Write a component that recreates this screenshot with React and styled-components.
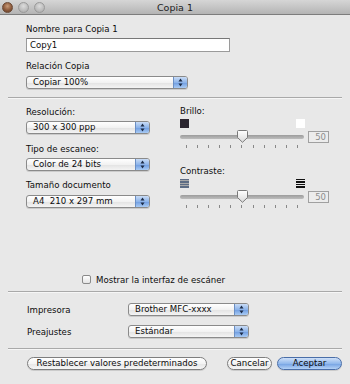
import React from "react";
import styled, { createGlobalStyle, css } from "styled-components";

const Global = createGlobalStyle`
  html, body { margin: 0; padding: 0; }
  body { width: 350px; height: 384px; overflow: hidden; background: #e8e8e8; }
  * { box-sizing: border-box; }
`;

const Window = styled.div`
  width: 350px;
  height: 384px;
  background: #e8e8e8;
  font-family: "DejaVu Sans", "Liberation Sans", sans-serif;
  font-size: 8.6px;
  color: #0c0c0c;
  display: flex;
  flex-direction: column;
`;

const TitleBar = styled.div`
  height: 15px;
  flex: none;
  display: flex;
  align-items: center;
  position: relative;
  background: linear-gradient(#d6d6d6, #b4b4b4);
  border-bottom: 1px solid #7d7d7d;
`;

const Lights = styled.div`
  display: flex;
  gap: 5px;
  padding-left: 2px;
`;

const Light = styled.span`
  width: 11px;
  height: 11px;
  border-radius: 50%;
  ${(p) =>
    p.$close
      ? css`
          background: radial-gradient(circle at 50% 35%, #c89a78 0%, #8c5a3c 55%, #5e3a26 100%);
          border: 1px solid #6b4a36;
        `
      : css`
          background: radial-gradient(circle at 50% 35%, #dcdcdc 0%, #bcbcbc 60%, #a6a6a6 100%);
          border: 1px solid #9a9a9a;
        `}
`;

const Title = styled.div`
  position: absolute;
  left: 0;
  right: 0;
  text-align: center;
  font-size: 9.5px;
  color: #222;
  pointer-events: none;
`;

const Content = styled.div`
  padding: 0 8px;
  display: flex;
  flex-direction: column;
`;

const Section = styled.div`
  padding-left: 18px;
  display: flex;
  flex-direction: column;
  align-items: flex-start;
`;

const Label = styled.div`
  line-height: 11px;
  height: 11px;
  margin-top: ${(p) => p.$mt || 0}px;
  white-space: nowrap;
`;

const TextField = styled.div`
  margin-top: 3px;
  width: 204px;
  height: 14px;
  background: #fff;
  border: 1px solid #9a9a9a;
  border-top-color: #777;
  padding-left: 3px;
  line-height: 12px;
`;

const PopupWrap = styled.div`
  margin-top: ${(p) => p.$mt || 0}px;
  width: ${(p) => p.$w}px;
  height: 13px;
  border: 1px solid #8a8a8a;
  border-radius: 3px;
  display: flex;
  overflow: hidden;
  background: linear-gradient(#ffffff, #f2f2f2 50%, #e2e2e2 51%, #f4f4f4);
  box-shadow: 0 1px 0 rgba(0, 0, 0, 0.12);
`;

const PopupText = styled.div`
  flex: 1;
  padding-left: 6px;
  line-height: 11px;
  white-space: pre;
`;

const PopupArrows = styled.div`
  width: 14px;
  flex: none;
  border-left: 1px solid #6b8fc4;
  background: linear-gradient(#c9dcf6, #8db4ea 50%, #6d9be0 51%, #a9cbf4);
  display: flex;
  align-items: center;
  justify-content: center;
`;

const Popup = ({ w, mt, children }) => (
  <PopupWrap $w={w} $mt={mt}>
    <PopupText>{children}</PopupText>
    <PopupArrows>
      <svg width="5" height="9" viewBox="0 0 5 9">
        <path d="M2.5 0.5 L4.5 3.5 L0.5 3.5 Z" fill="#1c2b45" />
        <path d="M2.5 8.5 L4.5 5.5 L0.5 5.5 Z" fill="#1c2b45" />
      </svg>
    </PopupArrows>
  </PopupWrap>
);

const Separator = styled.div`
  height: 2px;
  flex: none;
  margin-top: ${(p) => p.$mt || 0}px;
  border-top: 1px solid #a9a9a9;
  border-bottom: 1px solid #f6f6f6;
`;

const Columns = styled.div`
  display: flex;
  padding-left: 18px;
`;

const LeftColumn = styled.div`
  width: 154px;
  display: flex;
  flex-direction: column;
  align-items: flex-start;
`;

const RightColumn = styled.div`
  display: flex;
  flex-direction: column;
`;

const SliderBlock = styled.div`
  margin-top: ${(p) => p.$mt}px;
  display: flex;
  flex-direction: column;
`;

const IconRow = styled.div`
  margin-top: 2px;
  width: 125px;
  height: 9px;
  display: flex;
  justify-content: space-between;
`;

const Swatch = styled.span`
  width: 9px;
  height: 9px;
  background: ${(p) => (p.$dark ? "#2b2630" : "#ffffff")};
`;

const Stripes = styled.span`
  width: 9px;
  height: 9px;
  background: repeating-linear-gradient(
    ${(p) => p.$c} 0 1.5px,
    ${(p) => p.$bg} 1.5px 2.5px
  );
`;

const SliderRow = styled.div`
  margin-top: 2px;
  height: 13px;
  display: flex;
  align-items: center;
  gap: 4px;
`;

const Track = styled.div`
  width: 124px;
  height: 13px;
  position: relative;
  &::before {
    content: "";
    position: absolute;
    left: 0;
    right: 0;
    top: 5px;
    height: 4px;
    border-radius: 2px;
    background: linear-gradient(#9c9c9c, #bdbdbd);
  }
`;

const ThumbSvg = styled.svg`
  position: absolute;
  left: 57px;
  top: 0;
`;

const ValueBox = styled.div`
  width: 21px;
  height: 12px;
  border: 1px solid #a0a0a0;
  background: #ececec;
  color: #8c8c8c;
  text-align: right;
  padding-right: 2px;
  line-height: 10px;
  font-size: 8.5px;
`;

const Ticks = styled.div`
  margin-top: 2px;
  width: 124px;
  padding: 0 6px;
  height: 3px;
  display: flex;
  justify-content: space-between;
`;

const Tick = styled.span`
  width: 1px;
  height: 3px;
  background: #888;
`;

const Slider = () => (
  <>
    <SliderRow>
      <Track>
        <ThumbSvg width="11" height="13" viewBox="0 0 11 13">
          <defs>
            <linearGradient id="tg" x1="0" y1="0" x2="0" y2="1">
              <stop offset="0" stopColor="#ffffff" />
              <stop offset="1" stopColor="#d9d9d9" />
            </linearGradient>
          </defs>
          <path
            d="M1.5 0.5 H9.5 Q10.5 0.5 10.5 1.5 V7.5 L5.5 12.3 L0.5 7.5 V1.5 Q0.5 0.5 1.5 0.5 Z"
            fill="url(#tg)"
            stroke="#7a7a7a"
          />
        </ThumbSvg>
      </Track>
      <ValueBox>50</ValueBox>
    </SliderRow>
    <Ticks>
      {Array.from({ length: 11 }).map((_, i) => (
        <Tick key={i} />
      ))}
    </Ticks>
  </>
);

const CheckRow = styled.div`
  margin-top: 66px;
  display: flex;
  align-items: center;
  gap: 5px;
  padding-left: 74px;
  height: 11px;
`;

const Checkbox = styled.span`
  width: 9px;
  height: 9px;
  border: 1px solid #8a8a8a;
  border-radius: 2px;
  background: linear-gradient(#ffffff, #e4e4e4);
`;

const FormRow = styled.div`
  margin-top: ${(p) => p.$mt}px;
  display: flex;
  align-items: center;
  padding-left: 19px;
`;

const FormLabel = styled.div`
  width: 101px;
`;

const ButtonRow = styled.div`
  margin-top: 7px;
  display: flex;
  padding-left: 19px;
`;

const Button = styled.div`
  width: ${(p) => p.$w}px;
  margin-left: ${(p) => p.$ml || 0}px;
  height: 13px;
  border-radius: 7px;
  border: 1px solid ${(p) => (p.$primary ? "#4a6ea8" : "#7e7e7e")};
  text-align: center;
  line-height: 11px;
  white-space: nowrap;
  background: ${(p) =>
    p.$primary
      ? "linear-gradient(#cfe0f8, #92b9ec 50%, #72a0e2 51%, #b4d2f6)"
      : "linear-gradient(#ffffff, #f4f4f4 50%, #e6e6e6 51%, #f6f6f6)"};
  box-shadow: 0 1px 0 rgba(0, 0, 0, 0.12);
`;

export default function App() {
  return (
    <Window>
      <Global />
      <TitleBar>
        <Lights>
          <Light $close />
          <Light />
          <Light />
        </Lights>
        <Title>Copia 1</Title>
      </TitleBar>
      <Content>
        <Section>
          <Label $mt={9}>Nombre para Copia 1</Label>
          <TextField>Copy1</TextField>
          <Label $mt={9}>Relación Copia</Label>
          <Popup w={162} mt={4}>Copiar 100%</Popup>
        </Section>
        <Separator $mt={8} />
        <Columns>
          <LeftColumn>
            <Label $mt={8}>Resolución:</Label>
            <Popup w={124} mt={3}>300 x 300 ppp</Popup>
            <Label $mt={10}>Tipo de escaneo:</Label>
            <Popup w={124} mt={3}>Color de 24 bits</Popup>
            <Label $mt={9}>Tamaño documento</Label>
            <Popup w={124} mt={4}>{"A4  210 x 297 mm"}</Popup>
          </LeftColumn>
          <RightColumn>
            <SliderBlock $mt={7}>
              <Label>Brillo:</Label>
              <IconRow>
                <Swatch $dark />
                <Swatch />
              </IconRow>
              <Slider />
            </SliderBlock>
            <SliderBlock $mt={18}>
              <Label>Contraste:</Label>
              <IconRow>
                <Stripes $c="#5d6c84" $bg="#a8a8a8" />
                <Stripes $c="#111" $bg="#e8e8e8" />
              </IconRow>
              <Slider />
            </SliderBlock>
          </RightColumn>
        </Columns>
        <CheckRow>
          <Checkbox />
          <span>Mostrar la interfaz de escáner</span>
        </CheckRow>
        <Separator $mt={6} />
        <FormRow $mt={10}>
          <FormLabel>Impresora</FormLabel>
          <Popup w={121}>Brother MFC-xxxx</Popup>
        </FormRow>
        <FormRow $mt={9}>
          <FormLabel>Preajustes</FormLabel>
          <Popup w={121}>Estándar</Popup>
        </FormRow>
        <Separator $mt={10} />
        <ButtonRow>
          <Button $w={180}>Restablecer valores predeterminados</Button>
          <Button $w={45} $ml={20}>Cancelar</Button>
          <Button $w={65} $ml={5} $primary>Aceptar</Button>
        </ButtonRow>
      </Content>
    </Window>
  );
}
